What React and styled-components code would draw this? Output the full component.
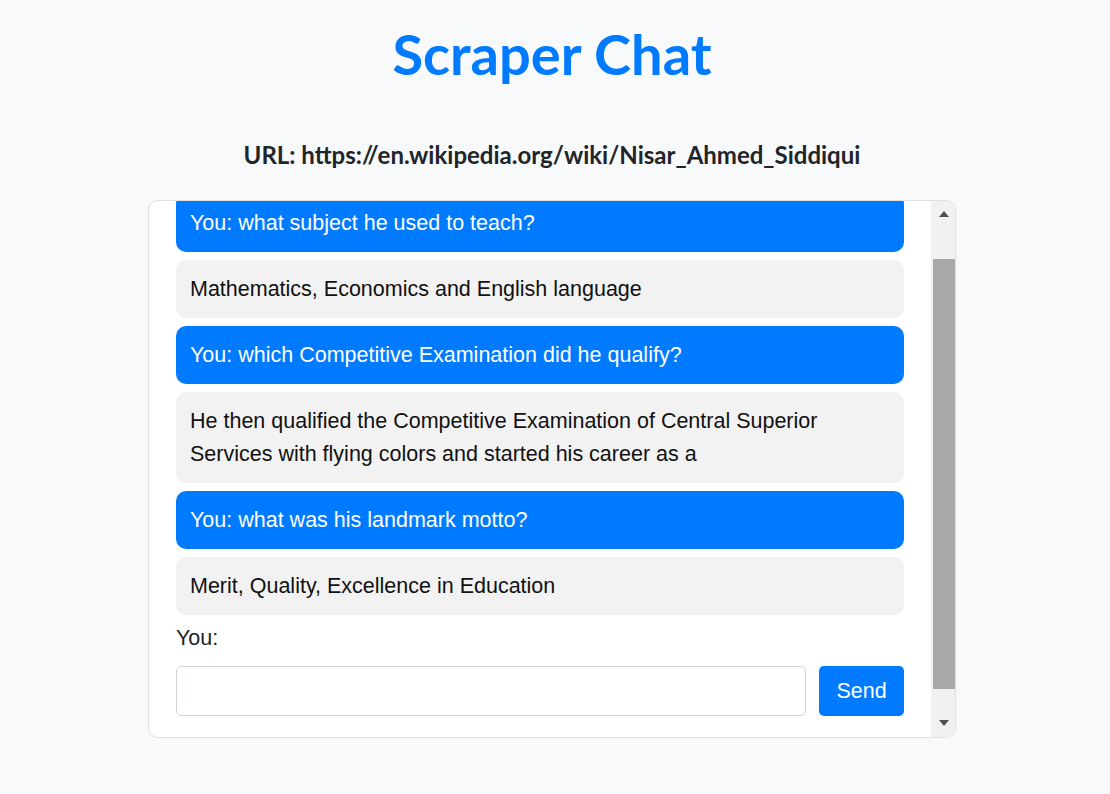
import React, { useLayoutEffect, useRef, useState } from 'react'
import styled, { createGlobalStyle } from 'styled-components'

const GlobalStyle = createGlobalStyle`
    * { box-sizing: border-box; }
    body {
        margin: 0;
        padding-right: 6px;
        background-color: #f8f9fa;
        font-family: "Liberation Sans", Arial, sans-serif;
        color: #212529;
    }
`
const Page = styled.main`
    display: flex;
    flex-direction: column;
    align-items: center;
    width: 808px;
    margin: 0 auto;
`
const Title = styled.h1`
    margin: 20px 0 0;
    font-family: Lato, "Open Sans", sans-serif;
    font-size: 56px;
    font-weight: 700;
    line-height: 1.2;
    color: #007bff;
`
const UrlLine = styled.h4`
    margin: 50px 0 0;
    font-family: Lato, "Open Sans", sans-serif;
    font-size: 24px;
    font-weight: 700;
    line-height: 1.5;
    color: #212529;
`
const ChatBox = styled.section`
    display: flex;
    width: 100%;
    height: 538px;
    margin-top: 27px;
    background-color: #fff;
    border: 1px solid #dfe1e3;
    border-radius: 10px;
    box-shadow: 0 0 2px rgba(0, 0, 0, 0.05);
    overflow: hidden;
`
const ScrollArea = styled.div`
    position: relative;
    flex: 1;
    padding: 38px 27px 53px 27px;
    overflow-y: auto;
    scrollbar-width: none;
    &::-webkit-scrollbar {
        display: none;
    }
`
const Rail = styled.div`
    display: flex;
    flex-direction: column;
    width: 24px;
    padding-left: 2px;
    background-color: #f1f1f1;
`
const ArrowButton = styled.div`
    display: flex;
    justify-content: center;
    height: 22px;
    padding-top: ${props => props.down ? '5px' : '10px'};
    &::before {
        content: "";
        width: 0;
        height: 0;
        border-left: 5.5px solid transparent;
        border-right: 5.5px solid transparent;
        border-top: ${props => props.down ? '6px solid #505050' : 'none'};
        border-bottom: ${props => props.down ? 'none' : '6px solid #505050'};
    }
`
const ThumbTrack = styled.div`
    position: relative;
    flex: 1;
`
const Thumb = styled.div`
    position: absolute;
    left: 0;
    right: 0;
    background-color: #a8a8a8;
`
const Message = styled.div`
    margin-bottom: 8px;
    padding: 12.5px 14px;
    border-radius: 10px;
    font-size: 21.5px;
    line-height: 33px;
    background-color: ${props => props.mine ? '#007bff' : '#f2f2f2'};
    color: ${props => props.mine ? '#fff' : '#111'};
`
const Label = styled.label`
    display: block;
    font-size: 21.5px;
    line-height: 30px;
    color: #212529;
`
const Form = styled.form`
    display: flex;
    align-items: center;
    gap: 13px;
    margin-top: 13px;
`
const Input = styled.input`
    flex: 1;
    height: 50px;
    padding: 0 14px;
    border: 1px solid #ced4da;
    border-radius: 5px;
    font-family: inherit;
    font-size: 21.5px;
    &:focus {
        outline: none;
        border-color: #80bdff;
    }
`
const SendButton = styled.button`
    width: 85px;
    height: 50px;
    border: none;
    border-radius: 5px;
    background-color: #007bff;
    color: #fff;
    font-family: inherit;
    font-size: 21.5px;
    cursor: pointer;
`

const initialMessages = [
    { mine: true, text: 'You: what subject he used to teach?' },
    { mine: false, text: 'Mathematics, Economics and English language' },
    { mine: true, text: 'You: which Competitive Examination did he qualify?' },
    { mine: false, text: 'He then qualified the Competitive Examination of Central Superior Services with flying colors and started his career as a' },
    { mine: true, text: 'You: what was his landmark motto?' },
    { mine: false, text: 'Merit, Quality, Excellence in Education' },
]

const App = () => {
    const [messages] = useState(initialMessages)
    const [text, setText] = useState('')
    const [thumb, setThumb] = useState({ top: 0, height: 0 })
    const areaRef = useRef(null)
    const formRef = useRef(null)
    const trackRef = useRef(null)

    const updateThumb = () => {
        const area = areaRef.current
        const track = trackRef.current
        if (!area || !track) return
        const h = track.clientHeight
        setThumb({
            top: h * area.scrollTop / area.scrollHeight,
            height: h * area.clientHeight / area.scrollHeight,
        })
    }

    useLayoutEffect(() => {
        const area = areaRef.current
        const form = formRef.current
        // keep the input in view, a little above the bottom edge
        area.scrollTop = form.offsetTop + form.offsetHeight + 21 - area.clientHeight
        updateThumb()
    }, [messages])

    return (
        <>
            <GlobalStyle />
            <Page>
                <Title>Scraper Chat</Title>
                <UrlLine>URL: https://en.wikipedia.org/wiki/Nisar_Ahmed_Siddiqui</UrlLine>
                <ChatBox>
                    <ScrollArea ref={areaRef} onScroll={updateThumb}>
                        {messages.map((m, i) => (
                            <Message key={i} mine={m.mine}>{m.text}</Message>
                        ))}
                        <Label htmlFor="question">You:</Label>
                        <Form ref={formRef} onSubmit={(e) => e.preventDefault()}>
                            <Input id="question" type="text" value={text} onChange={(e) => setText(e.target.value)} />
                            <SendButton type="submit">Send</SendButton>
                        </Form>
                    </ScrollArea>
                    <Rail>
                        <ArrowButton />
                        <ThumbTrack ref={trackRef}>
                            <Thumb style={{ top: thumb.top, height: thumb.height }} />
                        </ThumbTrack>
                        <ArrowButton down />
                    </Rail>
                </ChatBox>
            </Page>
        </>
    )
}

export default App
